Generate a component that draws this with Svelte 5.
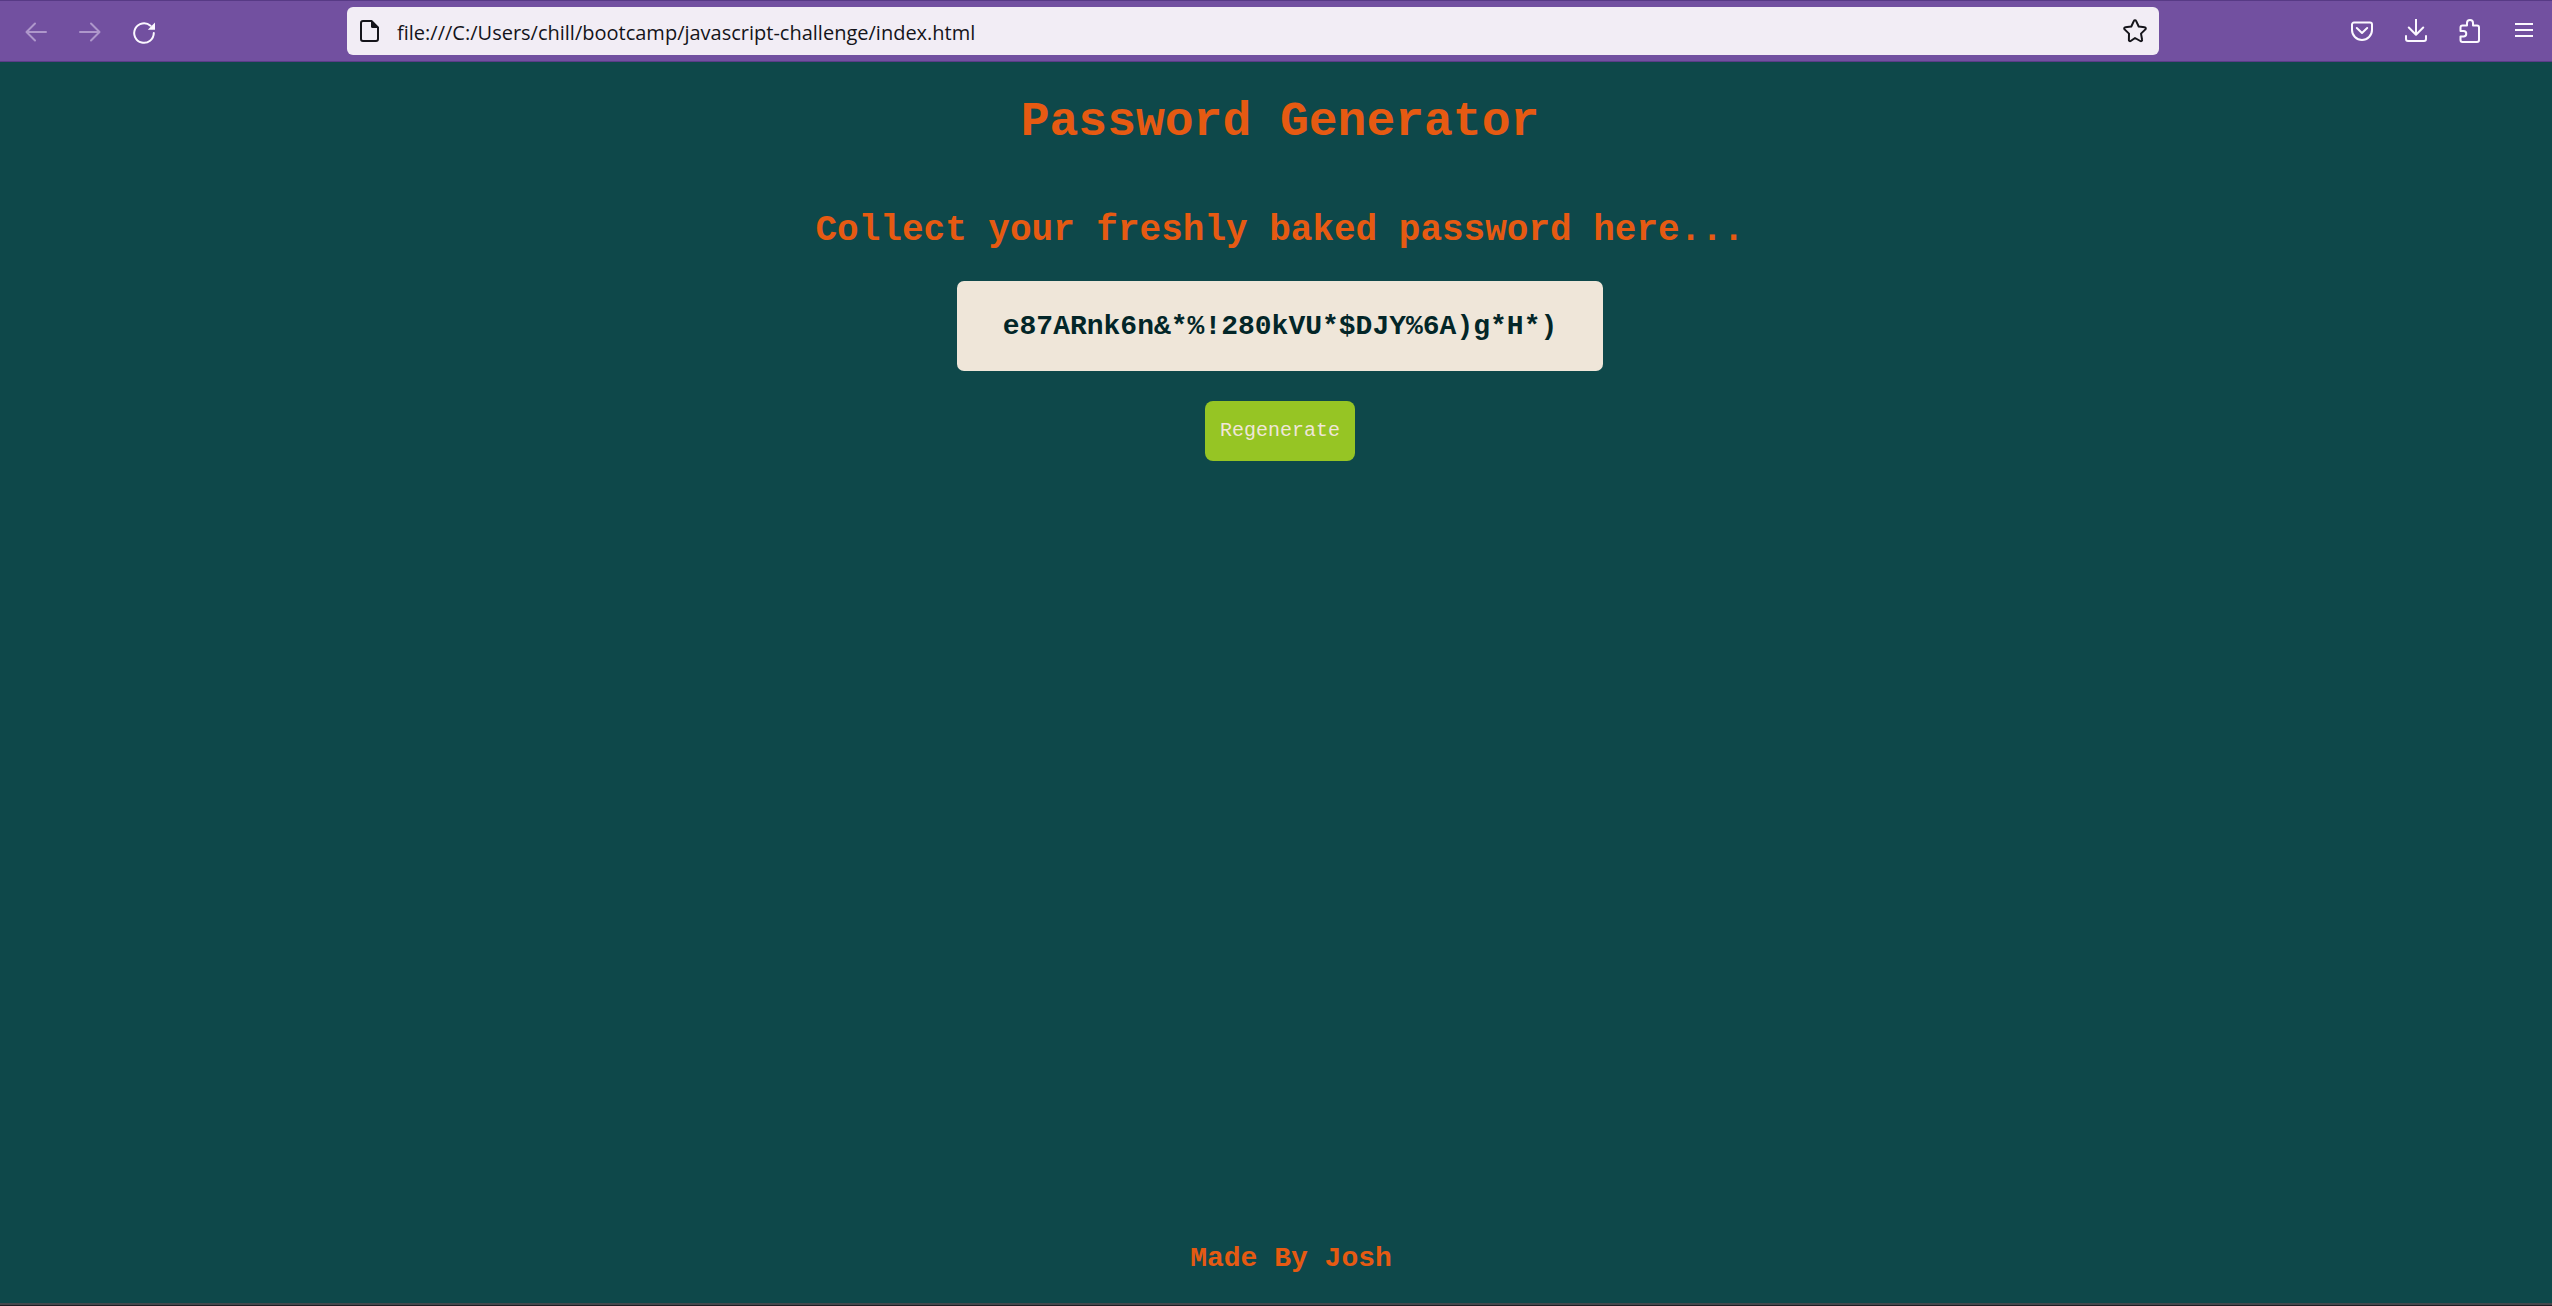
<script>
  const length = 33;
  const alphabet = 'ABCDEFGHJKLMNPRSTUVYabcdefghkmnpqrstuvwxyz0123456789!$%&*)';

  let url = $state('file:///C:/Users/chill/bootcamp/javascript-challenge/index.html');
  let password = $state('e87ARnk6n&*%!280kVU*$DJY%6A)g*H*)');

  function regenerate() {
    password = Array.from(
      { length },
      () => alphabet[Math.floor(Math.random() * alphabet.length)]
    ).join('');
  }
</script>

<div class="window">
  <header class="toolbar">
    <nav class="group start" aria-label="Navigation">
      <button class="tool" aria-label="Back" disabled>
        <svg width="24" height="24" viewBox="0 0 24 24"><path d="M22 12H3M11 3.5 2.5 12l8.500 8.500" /></svg>
      </button>
      <button class="tool" aria-label="Forward" disabled>
        <svg width="24" height="24" viewBox="0 0 24 24"><path d="M2 12h19M13 3.500l8.500 8.500-8.500 8.500" /></svg>
      </button>
      <button class="tool" aria-label="Reload">
        <svg width="24" height="24" viewBox="0 0 24 24">
          <path d="M21.800 13a9.800 9.800 0 1 1-3.300-7.300" />
          <path class="solid" d="M23 2.500v7.200h-7.200z" />
        </svg>
      </button>
    </nav>

    <div class="address">
      <svg width="24" height="24" viewBox="0 0 24 24">
        <path d="M5 2h8.500l6.500 6.500V20a2 2 0 0 1-2 2H5a2 2 0 0 1-2-2V4a2 2 0 0 1 2-2z" />
        <path class="solid" d="M13 1.500v6a1.500 1.500 0 0 0 1.500 1.500h6z" />
      </svg>
      <input type="text" aria-label="Address" bind:value={url} />
      <button class="star" aria-label="Bookmark this page">
        <svg width="26" height="26" viewBox="0 0 26 26">
          <path d="M11.900 2.900a1.200 1.200 0 0 1 2.200 0l2.600 5.600 6 .8a1.200 1.200 0 0 1 .7 2.100l-4.400 4.200 1.100 6.100a1.200 1.200 0 0 1-1.800 1.300L13 20l-4.300 3a1.200 1.200 0 0 1-1.800-1.300L7 15.600l-4.400-4.200a1.200 1.200 0 0 1 .7-2.100l6-.8z" />
        </svg>
      </button>
    </div>

    <div class="group end">
      <button class="tool" aria-label="Save to Pocket">
        <svg width="24" height="24" viewBox="0 0 24 24">
          <path d="M4 3.500h16a2 2 0 0 1 2 2V11a10 10 0 0 1-20 0V5.500a2 2 0 0 1 2-2z" />
          <path d="m6.800 9 5.200 5 5.200-5" />
        </svg>
      </button>
      <button class="tool" aria-label="Downloads">
        <svg width="24" height="24" viewBox="0 0 24 24">
          <path d="M12 0v15M4.800 8.500 12 15.700l7.200-7.200M2 17v3a2 2 0 0 0 2 2h16a2 2 0 0 0 2-2v-3" />
        </svg>
      </button>
      <button class="tool" aria-label="Extensions">
        <svg width="24" height="24" viewBox="0 0 24 24">
          <path d="M4.500 23h14.500a2 2 0 0 0 2-2V8.500a2 2 0 0 0-2-2h-4V4a3 3 0 0 0-6 0v2.500H4.500a2 2 0 0 0-2 2V12h3a2.500 2.500 0 0 1 0 5.500h-3V21a2 2 0 0 0 2 2z" />
        </svg>
      </button>
      <button class="tool" aria-label="Menu">
        <svg width="24" height="24" viewBox="0 0 24 24"><path class="bars" d="M3 5h18M3 11h18M3 17h18" /></svg>
      </button>
    </div>
  </header>

  <main>
    <h1>Password Generator</h1>
    <h2>Collect your freshly baked password here...</h2>
    <output class="password">{password}</output>
    <button class="regenerate" onclick={regenerate}>Regenerate</button>
  </main>

  <footer>Made By Josh</footer>
</div>

<style>
  :global(body) {
    background: #0e484a;
  }

  .window {
    box-sizing: border-box;
    display: flex;
    flex-direction: column;
    min-height: 100vh;
    border-bottom: 1px solid #1d1b22;
    background: #0e484a;
    color: #e65a12;
    font-family: 'Courier New', 'Liberation Mono', monospace;
  }

  button {
    border: 0;
    cursor: pointer;
  }

  svg {
    flex: none;
    fill: none;
    stroke: currentColor;
    stroke-width: 2;
    stroke-linecap: round;
    stroke-linejoin: round;
  }

  .solid {
    fill: currentColor;
    stroke: none;
  }

  .bars {
    stroke-linecap: butt;
  }

  .toolbar {
    display: flex;
    align-items: center;
    justify-content: space-between;
    padding: 6px 1px 6px 9px;
    border-top: 1px solid #573a85;
    border-bottom: 1px solid #5a3c88;
    background: #7250a0;
    color: #fbf8ff;
  }

  .group {
    display: flex;
  }

  .tool {
    display: flex;
    align-items: center;
    justify-content: center;
    width: 54px;
    height: 48px;
    padding: 0;
    background: none;
    color: inherit;
  }

  .start .tool {
    padding-top: 2px;
  }

  .tool:disabled {
    color: #ae97cb;
    cursor: default;
  }

  .address {
    box-sizing: border-box;
    display: flex;
    align-items: center;
    gap: 15px;
    width: 71vw;
    height: 48px;
    padding: 0 11px;
    border-radius: 6px;
    background: #f2edf5;
    color: #15141a;
  }

  .address input {
    flex: 1;
    min-width: 0;
    padding: 2px 0 0;
    border: 0;
    outline: 0;
    background: none;
    color: inherit;
    font: 20px 'Segoe UI', 'Open Sans', sans-serif;
  }

  .star {
    display: flex;
    padding: 0;
    background: none;
    color: inherit;
  }

  main {
    flex: 1;
    display: flex;
    flex-direction: column;
    align-items: center;
    padding: 33px 0 32px 8px;
    text-align: center;
  }

  h1 {
    margin: 0 0 62px;
    font-size: 48px;
    line-height: 54px;
  }

  h2 {
    margin: 0 0 30px;
    font-size: 36px;
    line-height: 40px;
  }

  .password {
    padding: 30px 46px 28px;
    border-radius: 7px;
    background: #efe6d9;
    color: #032628;
    font-size: 28px;
    font-weight: bold;
    line-height: 32px;
  }

  .regenerate {
    margin-top: 30px;
    padding: 18px 15px;
    border-radius: 8px;
    background: #96c524;
    color: #efe6d9;
    font-family: inherit;
    font-size: 20px;
    line-height: 24px;
  }

  footer {
    padding: 0 0 28px 30px;
    border-bottom: 2px solid #45474c;
    font-size: 28px;
    font-weight: bold;
    line-height: 32px;
    text-align: center;
  }
</style>
